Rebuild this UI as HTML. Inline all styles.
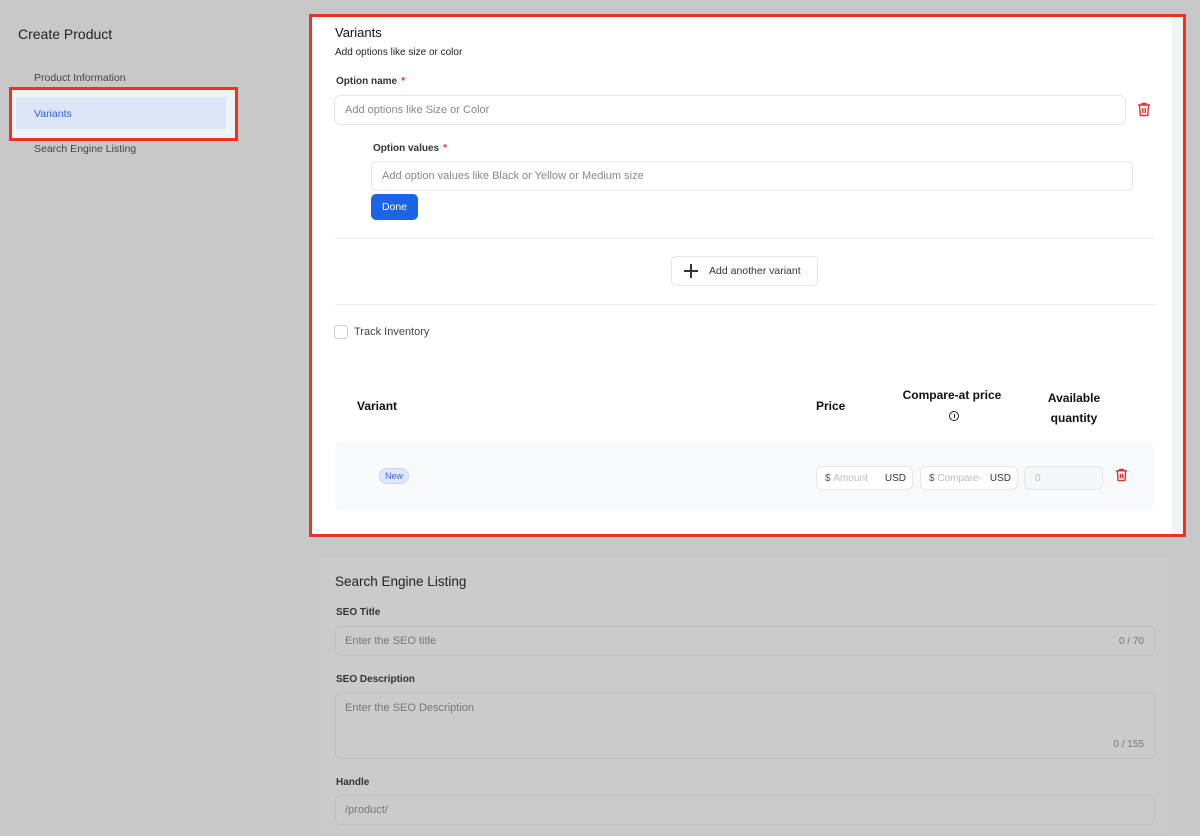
<!DOCTYPE html>
<html><head><style>
*{box-sizing:border-box;margin:0;padding:0}
body{width:1200px;height:827px;overflow:hidden;background:#c8c8c8;font-family:"Liberation Sans",sans-serif;color:#222;position:relative}
.abs{position:absolute}
.lbl{font-size:10px;font-weight:bold;color:#333}
.req{color:#e53935;margin-left:4px}
.inp{position:absolute;border:1px solid #e6e6e6;border-radius:6px;background:#fff;font-size:11px;color:#888;padding-left:10px;display:flex;align-items:center}
.ginp{position:absolute;border:1px solid #c0c0c0;border-radius:5px;font-size:11px;color:#777;padding-left:9px;display:flex;align-items:center}
.th{position:absolute;font-size:12px;font-weight:bold;color:#111;text-align:center}
</style></head><body>
<div class="abs" style="left:18px;top:26px;font-size:14px;color:#222">Create Product</div>
<div class="abs" style="left:34px;top:72px;font-size:10.5px;color:#444">Product Information</div>
<div class="abs" style="left:9px;top:87px;width:229px;height:54px;border:3px solid #ea3323;background:#eef3f6"></div>
<div class="abs" style="left:16px;top:97px;width:210px;height:32px;background:#dde6f6;font-size:10.5px;color:#2f63d8;padding:11px 0 0 18px">Variants</div>
<div class="abs" style="left:34px;top:143px;font-size:10.5px;color:#444">Search Engine Listing</div>

<div class="abs" style="left:309px;top:14px;width:877px;height:523px;border:3px solid #ea3323;background:#fff"></div>
<div class="abs" style="left:1172px;top:17px;width:11px;height:517px;background:#f1f3f4"></div>

<div class="abs" style="left:335px;top:25px;font-size:13px;color:#111">Variants</div>
<div class="abs" style="left:335px;top:47px;font-size:10px;color:#222">Add options like size or color</div>
<div class="abs lbl" style="left:336px;top:76px">Option name<span class="req">*</span></div>
<div class="inp" style="left:334px;top:95px;width:792px;height:30px">Add options like Size or Color</div>
<svg class="abs" style="left:1137px;top:102px" width="14" height="15" viewBox="0 0 14 15" fill="none" stroke="#d33" stroke-width="1.4"><path d="M1 3h12M5 3V1.5h4V3M2.5 3l.8 10.5h7.4L11.5 3M5.8 6v5M8.2 6v5"/></svg>
<div class="abs lbl" style="left:373px;top:143px">Option values<span class="req">*</span></div>
<div class="inp" style="left:371px;top:161px;width:762px;height:30px">Add option values like Black or Yellow or Medium size</div>
<div class="abs" style="left:371px;top:194px;width:47px;height:26px;background:#1a64e8;border-radius:5px;color:#fff;font-size:10.5px;text-align:center;line-height:26px">Done</div>
<div class="abs" style="left:335px;top:238px;width:821px;height:1px;background:#eee"></div>
<div class="abs" style="left:671px;top:256px;width:147px;height:30px;border:1px solid #e6e6e6;border-radius:5px;font-size:10.5px;color:#333;line-height:28px;padding-left:37px">Add another variant</div>
<div class="abs" style="left:684px;top:270px;width:14px;height:1.5px;background:#333"></div>
<div class="abs" style="left:690.3px;top:264px;width:1.5px;height:14px;background:#333"></div>
<div class="abs" style="left:335px;top:304px;width:821px;height:1px;background:#eee"></div>
<div class="abs" style="left:334px;top:325px;width:14px;height:14px;border:1px solid #ccc;border-radius:3px"></div>
<div class="abs" style="left:354px;top:326px;font-size:11px;color:#444">Track Inventory</div>

<div class="th" style="left:357px;top:399px">Variant</div>
<div class="th" style="left:816px;top:399px">Price</div>
<div class="th" style="left:892px;top:388px;width:120px">Compare-at price</div>
<div class="abs" style="left:949px;top:411px;width:10px;height:10px;border:1px solid #222;border-radius:50%"></div>
<div class="abs" style="left:953.5px;top:414px;width:1px;height:4px;background:#222"></div>
<div class="th" style="left:1030px;top:388px;width:88px;line-height:20px">Available quantity</div>

<div class="abs" style="left:335px;top:442px;width:820px;height:68px;background:#f7f9fb;border-radius:6px"></div>
<div class="abs" style="left:379px;top:468px;width:30px;height:16px;border-radius:8px;background:#dfe7fb;border:1px solid #c9d6f5;font-size:9px;color:#3b68d6;text-align:center;line-height:14px">New</div>
<div class="inp" style="left:816px;top:466px;width:97px;height:24px;font-size:10px;padding-left:8px;color:#bbb"><span style="color:#555">$</span>&nbsp;Amount<span style="position:absolute;right:6px;color:#333">USD</span></div>
<div class="inp" style="left:920px;top:466px;width:98px;height:24px;font-size:10px;padding-left:8px;color:#bbb"><span style="color:#555">$</span>&nbsp;Compare-<span style="position:absolute;right:6px;color:#333">USD</span></div>
<div class="inp" style="left:1024px;top:466px;width:79px;height:24px;font-size:10px;background:#f5f7f9;color:#bbb">0</div>
<svg class="abs" style="left:1115px;top:468px" width="13" height="14" viewBox="0 0 14 15" fill="none" stroke="#d33" stroke-width="1.5"><path d="M1 3h12M5 3V1.5h4V3M2.5 3l.8 10.5h7.4L11.5 3M5.8 6v5M8.2 6v5"/></svg>

<div class="abs" style="left:318px;top:556px;width:852px;height:280px;background:#cbcbcb;border:1px solid #c5c5c5;border-radius:6px"></div>
<div class="abs" style="left:335px;top:574px;font-size:13.5px;color:#222">Search Engine Listing</div>
<div class="abs lbl" style="left:336px;top:607px">SEO Title</div>
<div class="ginp" style="left:335px;top:626px;width:820px;height:30px">Enter the SEO title<span style="position:absolute;right:10px;font-size:10px;color:#777">0 / 70</span></div>
<div class="abs lbl" style="left:336px;top:674px">SEO Description</div>
<div class="ginp" style="left:335px;top:692px;width:820px;height:67px;align-items:flex-start;padding-top:9px">Enter the SEO Description<span style="position:absolute;right:10px;bottom:8px;font-size:10px;color:#777">0 / 155</span></div>
<div class="abs lbl" style="left:336px;top:777px">Handle</div>
<div class="ginp" style="left:335px;top:795px;width:820px;height:30px">/product/</div>
</body></html>
